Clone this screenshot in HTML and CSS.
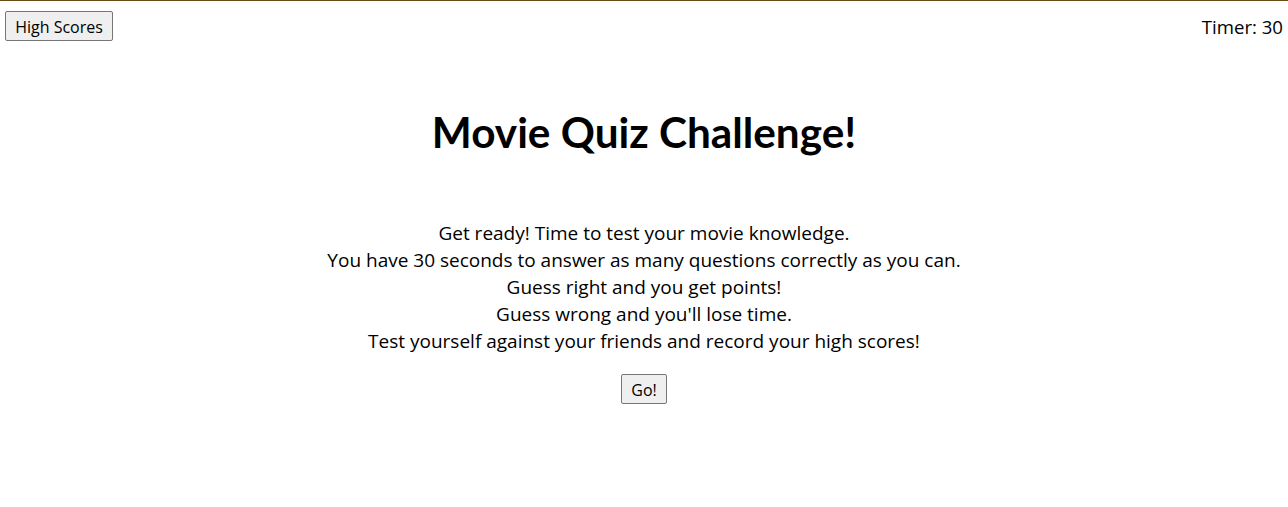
FILE: index.html
```html
<!DOCTYPE html>
<html lang="en">
<head>
<meta charset="utf-8">
<title>Movie Quiz Challenge</title>
<link rel="stylesheet" href="styles.css">
</head>
<body>
<header class="topbar">
  <button class="btn btn-scores">High Scores</button>
  <div class="timer">Timer: <span>30</span></div>
</header>
<main class="intro">
  <h1 class="title">Movie Quiz Challenge!</h1>
  <div class="rules">
    <p>Get ready! Time to test your movie knowledge.</p>
    <p>You have 30 seconds to answer as many questions correctly as you can.</p>
    <p>Guess right and you get points!</p>
    <p>Guess wrong and you'll lose time.</p>
    <p>Test yourself against your friends and record your high scores!</p>
  </div>
  <button class="btn btn-go">Go!</button>
</main>
</body>
</html>
```
FILE: styles.css
```css
html, body {
  margin: 0;
  padding: 0;
  background: #ffffff;
}
body {
  font-family: "Open Sans", "Noto Sans", sans-serif;
  color: #000;
  border-top: 1px solid #6b4c12;
}
.topbar {
  display: flex;
  justify-content: space-between;
  align-items: flex-start;
  padding: 10px 5px 0 5px;
}
.btn {
  font-family: "Open Sans", "Noto Sans", sans-serif;
  font-size: 16px;
  line-height: 20px;
  color: #000;
  background: #efefef;
  border: 1px solid #767676;
  border-radius: 2px;
  padding: 5px 0 3px;
  cursor: pointer;
}
.btn-scores {
  width: 108px;
}
.timer {
  font-size: 18.6px;
  line-height: 24px;
  padding-top: 4px;
}
.intro {
  display: flex;
  flex-direction: column;
  align-items: center;
  text-align: center;
}
.title {
  font-family: "Lato", "Open Sans", sans-serif;
  font-size: 42.3px;
  font-weight: 700;
  line-height: 58px;
  margin: 62px 0 0 0;
}
.rules {
  margin-top: 59px;
  font-size: 19px;
  line-height: 27px;
}
.rules p {
  margin: 0;
}
.btn-go {
  margin-top: 19px;
  width: 46px;
}
```
